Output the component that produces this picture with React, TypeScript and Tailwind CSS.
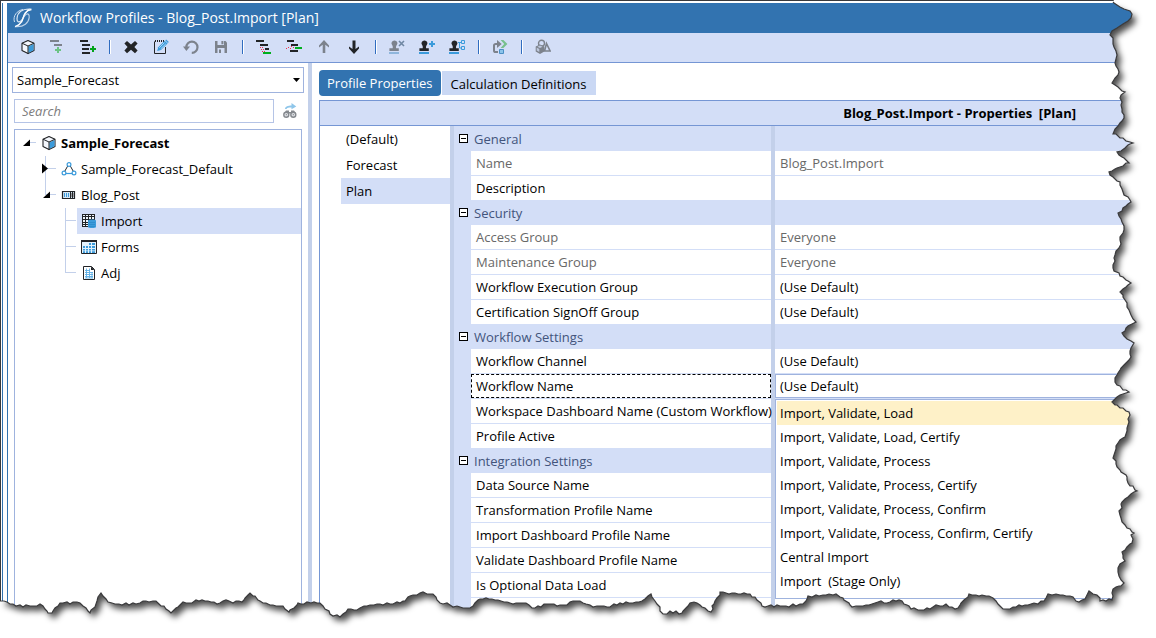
import type { ReactNode } from "react";

/* ---------- icons ---------- */

function Glyph({ children, label }: { children: ReactNode; label?: string }) {
  return (
    <svg viewBox="0 0 16 16" className="h-4 w-4 shrink-0" aria-hidden={label ? undefined : true} aria-label={label}>
      {children}
    </svg>
  );
}

const INK = "#222427";
const GREY = "#7c828c";
const BLUE = "#3b9bdb";

const CubeIcon = () => (
  <Glyph>
    <path d="M8 1.500 14 4.200v7.300L8 14.600 2 11.500V4.200z" fill="#f4f7fd" stroke={INK} strokeWidth="1.100" strokeLinejoin="round" />
    <path d="M8.300 7.500 13.500 5v6.300l-5.200 2.700z" fill={BLUE} />
    <path d="M2 4.200 8 7l6-2.800M8 7v7.600" fill="none" stroke={INK} />
  </Glyph>
);

const AddChildIcon = () => (
  <Glyph>
    <path d="M0 1h9v2H0zM4 5h8v2H4z" fill={GREY} />
    <path d="M7 8h2v2h2v2H9v2H7v-2H5v-2h2z" fill="#6cc384" />
  </Glyph>
);

const AddSiblingIcon = () => (
  <Glyph>
    <path d="M0 1h8v2H0zM2 5h8v2H2zM2 9h7v2H2zM2 13h8v2H2z" fill={INK} />
    <path d="M12 7h2v2h2v2h-2v2h-2v-2h-2V9h2z" fill="#00a31a" />
  </Glyph>
);

const DeleteIcon = () => (
  <Glyph>
    <path d="M4 2 8 5.400 12 2 14.600 4.600 11.400 8 14.600 11.600 12 14.200 8 10.800 4 14.200 1.400 11.600 4.600 8 1.400 4.600z" fill={INK} />
  </Glyph>
);

const EditIcon = () => (
  <Glyph>
    <path d="M1.500 2.500v12h11V8" fill="none" stroke={INK} />
    <path d="M2 2h9" stroke={INK} strokeWidth="2" strokeDasharray="1 1" />
    <path d="m4.200 12 1-3.800 6.500-6.500 2.900 2.800L8 11z" fill={BLUE} />
    <path d="m6.300 8.700 5.100-5.100M7.700 9.900l5.100-5" stroke="#c8e4f7" strokeWidth=".8" />
    <path d="m12.200 1.300 1-.9 2.600 2.600-1 1z" fill={BLUE} />
  </Glyph>
);

const UndoIcon = () => (
  <Glyph>
    <path d="M3.300 8.200A5.600 5.600 0 1 1 8.800 13.800" fill="none" stroke={GREY} strokeWidth="2.200" />
    <path d="M0 7.600h7L3.400 12z" fill={GREY} />
  </Glyph>
);

const SaveIcon = () => (
  <Glyph>
    <path d="M2 2h10.500L14 3.600V14H2z" fill={GREY} />
    <path d="M4.500 2h6.500v4H4.500zM4.500 9h7v5h-7z" fill="#d3def7" />
    <path d="M8.400 2h2v3.200h-2zM6 10.500h2V14H6z" fill={GREY} />
  </Glyph>
);

const MoveUnderIcon = () => (
  <Glyph>
    <path d="M0 1h8v2H0zM4 5h8v2H4zM9 9h4v2H9z" fill={INK} />
    <path d="M4 8h1v1H4zM6 8h1v1H6zM5 10h1v1H5zM7 10h1v1H7zM6 12h1v1H6zM8 12h1v1H8z" fill="#ef2f4a" />
    <path d="M7 13h8v2H7z" fill="#00b01e" />
  </Glyph>
);

const MoveBesideIcon = () => (
  <Glyph>
    <path d="M1 1h7v2H1zM5 5h7v2H5zM4 11h8v2H4z" fill={INK} />
    <path d="M0 9h1v1H0zM2 8h1v1H2zM4 9h1v1H4zM5 7h1v1H5zM7 8h1v1H7z" fill="#ef2f4a" />
    <path d="M9 8h7v2H9z" fill="#00b01e" />
  </Glyph>
);

const ArrowUpIcon = () => (
  <Glyph>
    <path d="M8 1 13 6.500v2L9.300 5.800V14H6.700V5.800L3 8.500v-2z" fill={GREY} />
  </Glyph>
);

const ArrowDownIcon = () => (
  <Glyph>
    <path d="M8 15 13 9.500v-2L9.500 10V1.500h-3V10L3 7.500v2z" fill={INK} />
  </Glyph>
);

function Stamp({ color, base }: { color: string; base: string }) {
  return (
    <>
      <path d="M5.500 1.400a2.900 2.900 0 0 1 2.300 4.700c-.8 1-.9 2-.7 3.200h2.700v2.600H.4V9.300h3.300c.2-1.200.1-2.200-.6-3.200A2.900 2.900 0 0 1 5.500 1.400z" fill={color} />
      <path d="M0 13h10v2H0z" fill={base} />
    </>
  );
}

const StampRemoveIcon = () => (
  <Glyph>
    <Stamp color={GREY} base="#8fb6dc" />
    <path d="m10 2 5 5M15 2l-5 5" stroke="#6f87a3" strokeWidth="1.600" />
  </Glyph>
);

const StampAddIcon = () => (
  <Glyph>
    <Stamp color={INK} base={BLUE} />
    <path d="M13 2v6M10 5h6" stroke={BLUE} strokeWidth="2" />
  </Glyph>
);

const StampTreeIcon = () => (
  <Glyph>
    <Stamp color={INK} base={BLUE} />
    <path d="M12.500 1.500h3v3h-3zM12.500 7.500h3v3h-3zM9 3.500h3.500M10.500 3.500v5.500h2" fill="none" stroke={BLUE} />
  </Glyph>
);

const RouteIcon = () => (
  <Glyph>
    <path d="M6 13H3.600A1.600 1.600 0 0 1 2 11.400V6.600A1.600 1.600 0 0 1 3.600 5H7" fill="none" stroke={GREY} strokeWidth="2" />
    <path d="M5 .9 9.700 5 5 9.100z" fill={GREY} />
    <path d="M8.600 1h2.800L15.400 5l-4 4H8.600l3.600-4z" fill="#77c08d" />
    <path d="M7.500 10.500h4v4h-4z" fill="#8cc4ea" stroke="#4b8fc4" />
  </Glyph>
);

const ShapesIcon = () => (
  <Glyph>
    <circle cx="6.500" cy="4.300" r="3" fill="none" stroke={GREY} strokeWidth="1.400" />
    <path d="m11.500 4.500 3.600 7.500H9.500z" fill="none" stroke={GREY} strokeWidth="1.600" />
    <path d="m5 5.600 4.300 2v5L5 15 .7 12.600v-5z" fill={GREY} />
    <path d="m1.700 8.600 2.600 1.300v3.100l-2.600-1.400zM5 6.600l2.600 1.200L5 9 2.400 7.800z" fill="#d3def7" opacity=".75" />
  </Glyph>
);

const FindIcon = () => (
  <Glyph>
    <path d="M3 6C3.300 3.600 6 2.600 9.500 2.600V0l4.800 3.400-4.800 2.900V4.500c-2.800 0-4.500.2-5 1.500z" fill="#8fc6ea" />
    <path d="M4 7.500h3v1.500h2V7.500h3l2 3H2z" fill="#85898e" />
    <circle cx="4.300" cy="11.700" r="2.500" fill="#dfe2e6" stroke="#85898e" strokeWidth="1.400" />
    <circle cx="11.300" cy="11.700" r="2.500" fill="#dfe2e6" stroke="#85898e" strokeWidth="1.400" />
    <path d="M3.800 11.700h1M10.800 11.700h1" stroke="#85898e" strokeWidth="1.200" />
  </Glyph>
);

const NetworkIcon = () => (
  <Glyph>
    <path d="m7 4.500-4 7M9 4.500l4 7" fill="none" stroke={INK} />
    <path d="M5 12.500h6" stroke={BLUE} strokeWidth="1.200" />
    <circle cx="8" cy="3.500" r="1.900" fill="#fff" stroke={BLUE} strokeWidth="1.200" />
    <circle cx="3" cy="12" r="1.900" fill="#fff" stroke={BLUE} strokeWidth="1.200" />
    <circle cx="13" cy="12" r="1.900" fill="#fff" stroke={BLUE} strokeWidth="1.200" />
  </Glyph>
);

const EntityIcon = () => (
  <Glyph>
    <path d="M1.500 4.500h12v7h-12z" fill="#d5e6f4" stroke={INK} strokeWidth="1.200" />
    <path d="M3 6h1v4H3zM5 6h1v4H5zM7 6h1v4H7z" fill={BLUE} />
    <path d="M9.500 5v6M11.500 5v6" stroke={INK} />
    <path d="M10.500 6v4M12.500 6v4" stroke="#9a9da2" />
  </Glyph>
);

const ImportIcon = () => (
  <Glyph>
    <path d="M1 1h13v13H1z" fill={INK} />
    <path d="M2 2h2v1H2zM5 2h2v1H5zM8 2h2v1H8zM11 2h2v1h-2zM2 4h2v2H2zM5 4h2v2H5zM8 4h2v2H8zM11 4h2v2h-2zM2 7h2v2H2zM5 7h2v2H5zM2 10h2v1H2zM5 10h2v1H5zM2 12h2v1H2zM5 12h2v1H5z" fill="#eef4fb" />
    <path d="M7 7.500C7 6 15 6 15 7.500V14c0 1.300-8 1.300-8 0z" fill={BLUE} />
    <path d="M8 9.500h6M8 11.500h6M8 13.500h6" stroke="#2a86c8" strokeWidth=".7" />
  </Glyph>
);

const FormsIcon = () => (
  <Glyph>
    <path d="M.5 1.500h15v13H.5z" fill="#e3f2fc" stroke={INK} />
    <path d="M0 1h16v2H0z" fill={INK} />
    <path d="M2 7h2v2H2zM5 7h2v2H5zM8 7h2v2H8zM11 7h3v2h-3zM2 10h2v1.500H2zM5 10h2v1.500H5zM8 10h2v1.500H8zM11 10h3v1.500h-3zM2 12.300h2V14H2zM5 12.300h2V14H5zM8 12.300h2V14H8zM11 12.300h3V14h-3zM8 4h2v2H8zM11 4h3v2h-3z" fill={BLUE} />
  </Glyph>
);

const AdjIcon = () => (
  <Glyph>
    <path d="M2.500 1.500h8l3 3v10h-11z" fill="#fff" stroke={INK} />
    <path d="M10 1.500V5h3.500z" fill={INK} />
    <path d="M4 5.500h5M4 7.500h8M4 9.500h8M4 11.500h8M4 13h8M5.500 3.500v9.500M8.500 3.500v9.500M11 7v6" stroke="#5caee4" strokeWidth=".9" />
  </Glyph>
);

const BrandMark = () => (
  <svg viewBox="0 0 20 20" className="h-5 w-5 shrink-0" aria-hidden>
    <path d="M16.500 1C9 1 4.500 4.500 4 10.500c-.2 3.500 1.800 4.500 4.500 2C11 10 11.500 4 16.500 1z" fill="none" stroke="#dce8f5" strokeWidth="1.200" />
    <path d="M3.500 18.700c7.500.3 12-3.700 12.700-9.200.4-3.600-1.700-4.700-4.200-2.200-2.700 2.800-3.300 8.400-8.500 11.400z" fill="none" stroke="#b9d0e8" strokeWidth="1.200" />
    <path d="M18.500 1.500C9.500 3 11 10.500 8.500 14 7.300 16 5.500 17.600 2 18.600" fill="none" stroke="#fff" strokeWidth="1.300" />
    <path d="M1.500 14C-.5 8 4 2.500 10 1.500" fill="none" stroke="#cfe0f1" />
  </svg>
);

/* ---------- title and toolbar ---------- */

type Tool = { label: string; icon: ReactNode; disabled?: boolean };

const toolGroups: Tool[][] = [
  [
    { label: "Cube", icon: <CubeIcon /> },
    { label: "Add child", icon: <AddChildIcon />, disabled: true },
    { label: "Add sibling", icon: <AddSiblingIcon /> },
  ],
  [
    { label: "Delete", icon: <DeleteIcon /> },
    { label: "Rename", icon: <EditIcon /> },
    { label: "Undo", icon: <UndoIcon />, disabled: true },
    { label: "Save", icon: <SaveIcon />, disabled: true },
  ],
  [
    { label: "Move as child", icon: <MoveUnderIcon /> },
    { label: "Move as sibling", icon: <MoveBesideIcon /> },
    { label: "Move up", icon: <ArrowUpIcon />, disabled: true },
    { label: "Move down", icon: <ArrowDownIcon /> },
  ],
  [
    { label: "Remove template", icon: <StampRemoveIcon />, disabled: true },
    { label: "Add template", icon: <StampAddIcon /> },
    { label: "Template tree", icon: <StampTreeIcon /> },
  ],
  [{ label: "Route", icon: <RouteIcon />, disabled: true }],
  [{ label: "Objects", icon: <ShapesIcon />, disabled: true }],
];

function Toolbar() {
  return (
    <div role="toolbar" aria-label="Profile actions" className="flex h-[30px] shrink-0 items-start border-b border-[#7596d4] bg-[#d3def7] pl-[5px]">
      {toolGroups.map((group, i) => (
        <div key={i} className="flex h-7 items-center">
          {i > 0 && (
            <span className="flex w-[13px] justify-center">
              <span className="h-[14px] w-[2px] border-r border-l border-r-white border-l-[#2f6cc0]" />
            </span>
          )}
          {group.map((tool) => (
            <button key={tool.label} type="button" aria-label={tool.label} disabled={tool.disabled} className="flex h-6 w-[30px] items-center justify-center">
              {tool.icon}
            </button>
          ))}
        </div>
      ))}
    </div>
  );
}

/* ---------- left pane ---------- */

type Node = { label: string; level: number; icon: ReactNode; state?: "open" | "closed"; bold?: boolean; selected?: boolean; last?: boolean };

const tree: Node[] = [
  { label: "Sample_Forecast", level: 0, icon: <CubeIcon />, state: "open", bold: true },
  { label: "Sample_Forecast_Default", level: 1, icon: <NetworkIcon />, state: "closed" },
  { label: "Blog_Post", level: 1, icon: <EntityIcon />, state: "open", last: true },
  { label: "Import", level: 2, icon: <ImportIcon />, selected: true },
  { label: "Forms", level: 2, icon: <FormsIcon /> },
  { label: "Adj", level: 2, icon: <AdjIcon />, last: true },
];

const indent = ["pl-0", "pl-5", "pl-10"];

function TreeRow({ node }: { node: Node }) {
  return (
    <li role="treeitem" aria-selected={!!node.selected} aria-level={node.level + 1} className={`flex h-[26px] ${indent[node.level]}`}>
      <svg viewBox="0 0 22 26" className="h-[26px] w-[22px] shrink-0" aria-hidden>
        {node.level > 0 && <path d={node.last ? "M10.500 0v13" : "M10.500 0v26"} stroke="#c3d0ea" />}
        <path d={node.level > 0 ? "M10.500 12.500H21" : "M14 12.500h7"} stroke="#c3d0ea" />
        {node.state === "open" && <path d="M15 9.500v6.500H8z" fill="#000" />}
        {node.state === "closed" && <path d="M7 7.500 13 12.500l-6 5z" fill="#000" />}
      </svg>
      <span className={`flex flex-1 items-center gap-1 pl-1 ${node.selected ? "bg-[#d3def7]" : ""} ${node.bold ? "font-bold" : ""}`}>
        {node.icon}
        {node.label}
      </span>
    </li>
  );
}

function LeftPane() {
  return (
    <aside className="flex w-[300px] shrink-0 flex-col pt-1">
      <div className="relative mx-1 flex">
        <select aria-label="Profile root" className="h-[26px] w-full appearance-none border border-[#9fb3de] bg-white px-1 outline-none">
          <option>Sample_Forecast</option>
        </select>
        <svg viewBox="0 0 7 4" className="pointer-events-none absolute top-[11px] right-1 h-1 w-[7px]" aria-hidden>
          <path d="M0 0h7L3.500 4z" />
        </svg>
      </div>
      <div className="mx-[6px] mt-[6px] flex items-center gap-2">
        <input type="search" aria-label="Search" placeholder="Search" className="h-6 w-[260px] border border-[#b5c4e6] px-[7px] outline-none placeholder:text-[#7d7d7d] placeholder:italic" />
        <button type="button" aria-label="Find next">
          <FindIcon />
        </button>
      </div>
      <ul role="tree" aria-label="Workflow profiles" className="mx-[6px] mt-[6px] flex-1 border border-b-0 border-[#9fb3de]">
        {tree.map((node) => (
          <TreeRow key={node.label} node={node} />
        ))}
      </ul>
    </aside>
  );
}

/* ---------- property grid ---------- */

type Row = { name: string; value?: string; readOnly?: boolean; focused?: boolean };

const groups: { title: string; rows: Row[] }[] = [
  {
    title: "General",
    rows: [{ name: "Name", value: "Blog_Post.Import", readOnly: true }, { name: "Description" }],
  },
  {
    title: "Security",
    rows: [
      { name: "Access Group", value: "Everyone", readOnly: true },
      { name: "Maintenance Group", value: "Everyone", readOnly: true },
      { name: "Workflow Execution Group", value: "(Use Default)" },
      { name: "Certification SignOff Group", value: "(Use Default)" },
    ],
  },
  {
    title: "Workflow Settings",
    rows: [
      { name: "Workflow Channel", value: "(Use Default)" },
      { name: "Workflow Name", value: "(Use Default)", focused: true },
      { name: "Workspace Dashboard Name (Custom Workflow)" },
      { name: "Profile Active" },
    ],
  },
  {
    title: "Integration Settings",
    rows: [
      { name: "Data Source Name" },
      { name: "Transformation Profile Name" },
      { name: "Import Dashboard Profile Name" },
      { name: "Validate Dashboard Profile Name" },
      { name: "Is Optional Data Load" },
      { name: "" },
    ],
  },
];

const workflowNames = [
  "Import, Validate, Load",
  "Import, Validate, Load, Certify",
  "Import, Validate, Process",
  "Import, Validate, Process, Certify",
  "Import, Validate, Process, Confirm",
  "Import, Validate, Process, Confirm, Certify",
  "Central Import",
  "Import  (Stage Only)",
];

function WorkflowNameEditor() {
  return (
    <div className="relative h-6">
      <button type="button" role="combobox" aria-expanded aria-controls="workflow-names" aria-label="Workflow Name" className="block h-6 w-full border border-[#9fb3de] bg-white px-1 text-left">
        (Use Default)
      </button>
      <ul id="workflow-names" role="listbox" aria-label="Workflow Name" className="absolute inset-x-0 top-[25px] z-10 border border-[#9fb3de] bg-white pt-px pb-[5px] pl-px">
        {workflowNames.map((name, i) => (
          <li key={name} role="option" aria-selected={i === 0} className={`flex h-6 items-center px-[3px] whitespace-pre ${i === 0 ? "bg-[#fef1c8]" : ""}`}>
            {name}
          </li>
        ))}
      </ul>
    </div>
  );
}

function PropertyGrid() {
  return (
    <table className="w-full table-fixed border-separate border-spacing-0 text-left">
      <colgroup>
        <col className="w-[17px]" />
        <col className="w-[300px]" />
        <col className="w-1" />
        <col />
      </colgroup>
      {groups.map((group) => (
        <tbody key={group.title}>
          <tr className="h-[25px]">
            <th colSpan={2} scope="rowgroup" className="bg-[#d3def7] p-0 font-normal text-[#42547c]">
              <span className="flex items-center gap-[6px] pl-[5px]">
                <button type="button" aria-label={`Collapse ${group.title}`} className="flex h-[9px] w-[9px] items-center justify-center border border-black bg-white">
                  <span className="h-px w-[5px] bg-black" />
                </button>
                {group.title}
              </span>
            </th>
            <td className="bg-[#c3d0ea] p-0" />
            <td className="bg-[#d3def7] p-0" />
          </tr>
          {group.rows.map((row, i) => {
            const last = i === group.rows.length - 1;
            const line = last ? "" : "border-b border-[#d3def7]";
            return (
              <tr key={row.name} className={`${last ? "h-6" : "h-[25px]"} ${row.readOnly ? "text-[#686868]" : "text-black"}`}>
                <td className="bg-[#d3def7] p-0" />
                <th scope="row" className={`p-0 font-normal whitespace-nowrap ${line}`}>
                  <span className={row.focused ? "flex h-6 items-center border border-dashed border-black px-1" : "px-[5px]"}>{row.name}</span>
                </th>
                <td className="bg-[#c3d0ea] p-0" />
                <td className={`p-0 ${line}`}>{row.focused ? <WorkflowNameEditor /> : <span className="px-[5px]">{row.value}</span>}</td>
              </tr>
            );
          })}
        </tbody>
      ))}
    </table>
  );
}

const scenarios = ["(Default)", "Forecast", "Plan"];

function RightPane() {
  return (
    <main className="flex min-w-0 flex-1 flex-col pt-[7px] pl-[7px]">
      <div role="tablist" className="flex h-[26px] items-center gap-px">
        <button type="button" role="tab" aria-selected className="h-[26px] rounded-[4px] bg-[#3273b0] px-2 text-white">
          Profile Properties
        </button>
        <button type="button" role="tab" aria-selected={false} className="h-6 bg-[#cad8f4] px-[9px] pt-px">
          Calculation Definitions
        </button>
      </div>
      <section className="mt-1 flex flex-1 flex-col border-t border-l border-[#7596d4]">
        <h2 className="h-[25px] border-b border-[#7596d4] bg-[#d3def7] pr-20 text-right leading-6 font-bold whitespace-pre">Blog_Post.Import - Properties  [Plan]</h2>
        <div className="flex flex-1">
          <ul role="listbox" aria-label="Scenario types" className="w-[130px] shrink-0 pl-[21px]">
            {scenarios.map((name) => (
              <li key={name} role="option" aria-selected={name === "Plan"} className={`flex h-[26px] items-center px-[5px] ${name === "Plan" ? "bg-[#d3def7]" : ""}`}>
                {name}
              </li>
            ))}
          </ul>
          <div className="w-1 shrink-0 bg-[#c3d0ea]" />
          <div className="min-w-0 flex-1">
            <PropertyGrid />
          </div>
        </div>
      </section>
    </main>
  );
}

/* ---------- torn paper edge ---------- */

const TEAR =
  "1113,2 1114,3 1120,7 1127,10 1132,14 1128,21 1123,24 1117,28 1112,31 1110,35 1113,38 1114,47 1117,55 1115,63 1119,72 1115,78 1112,83 1118,87 1125,92 1121,95 1122,112 1124,118 1120,123 1115,129 1113,134 1123,138 1133,143 1125,148 1117,152 1122,157 1129,163 1120,167 1109,172 1113,177 1120,182 1123,192 1131,202 1123,208 1118,213 1122,222 1124,230 1120,240 1119,248 1114,258 1113,268 1120,276 1131,283 1120,292 1125,300 1129,310 1131,315 1136,322 1128,326 1122,333 1127,339 1134,343 1131,348 1129,360 1120,370 1115,378 1117,385 1129,392 1117,397 1112,402 1120,408 1129,412 1128,425 1125,437 1118,443 1113,458 1120,470 1127,477 1128,483 1137,491 1128,497 1121,504 1120,515 1125,525 1134,533 1131,535 1132,543 1122,552 1125,561 1120,564 1118,572 1121,580 1124,583 1113,589 1112,600 1100,601 1097,595 1089,591 1085,599 1079,602 1073,597 1063,595 1056,594 1048,594 1044,601 1028,605 1013,607 1003,609 996,601 989,596 969,594 964,600 958,608 949,607 946,604 933,607 921,610 911,609 902,601 878,602 866,605 852,607 843,598 836,594 816,595 808,596 803,604 786,606 762,606 757,600 750,594 720,592 717,598 711,612 705,608 697,603 690,603 682,613 670,611 663,614 657,604 651,594 642,601 620,603 607,607 593,607 583,603 573,601 567,605 547,604 535,608 523,603 513,604 498,600 480,599 475,603 470,608 450,605 440,603 433,594 420,593 410,596 400,603 380,604 367,606 357,610 348,609 340,617 330,614 320,603 298,603 289,612 283,606 273,605 263,603 250,593 242,602 223,601 217,604 205,601 183,602 171,613 156,601 133,603 122,605 108,602 101,593 97,601 90,613 80,603 60,603 52,613 48,613 40,604 23,607 13,604 7,602 0,601";

/* Splits every long segment into short ones that wander a little to either side. */
function roughen(points: string) {
  const pts = points.split(" ").map((p) => p.split(",").map(Number));
  const out: string[] = [];
  let seed = 7;
  pts.forEach(([x, y], i) => {
    out.push(`${x} ${y}`);
    const next = pts[i + 1];
    if (!next) return;
    const steps = Math.floor(Math.hypot(next[0] - x, next[1] - y) / 3);
    for (let s = 1; s < steps; s++) {
      seed = (seed * 16807) % 2147483647;
      const wander = (seed % 3) - 1;
      const horizontal = Math.abs(next[0] - x) > Math.abs(next[1] - y);
      const px = Math.round(x + ((next[0] - x) * s) / steps) + (horizontal ? 0 : wander);
      const py = Math.round(y + ((next[1] - y) * s) / steps) + (horizontal ? wander : 0);
      out.push(`${px} ${py}`);
    }
  });
  return out.join("L");
}

function TornEdge() {
  const edge = roughen(TEAR);
  const outside = `M1114 0L${edge}V638H1156V0Z`;
  return (
    <svg viewBox="0 0 1156 638" preserveAspectRatio="none" className="pointer-events-none absolute inset-0 z-20 h-full w-full" aria-hidden>
      <defs>
        <clipPath id="outside">
          <path d={outside} />
        </clipPath>
        <filter id="soften" x="-5%" y="-5%" width="110%" height="110%">
          <feGaussianBlur stdDeviation="3" />
        </filter>
      </defs>
      <path d={outside} fill="#fff" />
      <g clipPath="url(#outside)">
        <path d={`M8 8H1108L${edge.replace("1113 2", "1113 6")}L8 590Z`} transform="translate(4 5)" fill="#000" fillOpacity=".7" filter="url(#soften)" />
      </g>
      <path d={`M${edge}`} fill="none" stroke="#3a3a3c" strokeWidth="1.200" />
    </svg>
  );
}

export default function App() {
  return (
    <div className="relative h-screen overflow-hidden bg-white font-['Open_Sans','Noto_Sans',sans-serif] text-[13px] leading-[18px] text-black">
      <div className="flex h-full border-t border-l border-[#3a3a3c]">
        <div className="mt-[2px] ml-px w-px shrink-0 bg-[#3273b0]" />
        <div className="mt-[2px] ml-1 flex min-w-0 flex-1 flex-col border-l border-[#3273b0]">
          <header className="flex h-[30px] shrink-0 items-center gap-[7px] bg-[#3273b0] pl-[5px] text-white">
            <BrandMark />
            <h1 className="text-[14px]">Workflow Profiles - Blog_Post.Import [Plan]</h1>
          </header>
          <Toolbar />
          <div className="flex min-h-0 flex-1">
            <LeftPane />
            <div className="w-1 shrink-0 bg-[#c3d0ea]" />
            <RightPane />
          </div>
        </div>
      </div>
      <TornEdge />
    </div>
  );
}
